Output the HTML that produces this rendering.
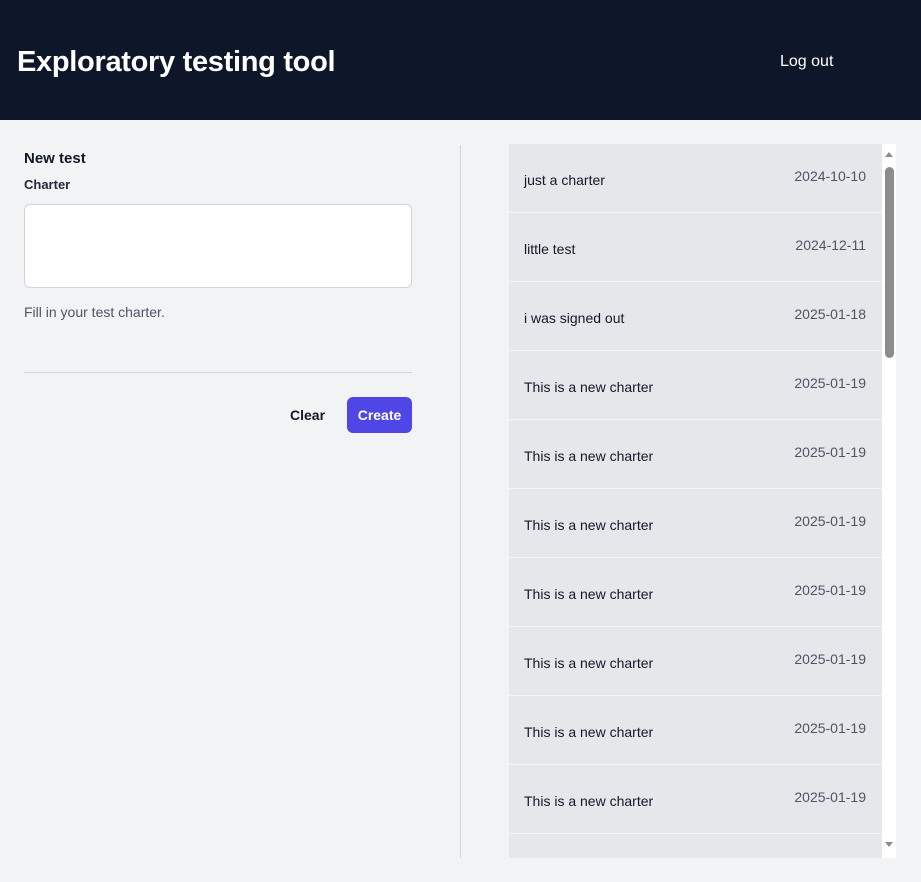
<!DOCTYPE html>
<html><head><meta charset="utf-8"><style>
*{box-sizing:border-box;margin:0;padding:0}
body{width:921px;height:882px;background:#f2f3f5;font-family:"Liberation Sans",sans-serif;color:#111827;overflow:hidden;position:relative}
.hdr{position:absolute;left:0;top:0;width:921px;height:120px;background:#0e1729}
.hdr h1{position:absolute;left:17px;top:46px;font-size:29px;font-weight:bold;color:#fff;letter-spacing:-0.3px}
.hdr .lo{position:absolute;left:780px;top:53px;font-size:16px;color:#fff}
.abs{position:absolute}
.ta{position:absolute;left:24px;top:204px;width:388px;height:84px;background:#fff;border:1px solid #d1d5db;border-radius:6px}
.div{position:absolute;left:460px;top:145px;width:1px;height:713px;background:#d1d5db}
.list{position:absolute;left:509px;top:144px;width:373px;height:714px;overflow:hidden;background:#e5e7eb}
.row{height:69px;border-bottom:1px solid #f3f4f6;position:relative;font-size:14px}
.row .t{position:absolute;left:15px;top:28px;color:#111827}
.row .d{position:absolute;right:16px;top:24px;color:#4b5563}
.sb{position:absolute;left:882px;top:144px;width:14px;height:714px;background:#fff}
.thumb{position:absolute;left:885px;top:167px;width:9px;height:191px;background:#8c8c8c;border-radius:5px}
</style></head><body>
<div class="hdr"><h1>Exploratory testing tool</h1><div class="lo">Log out</div></div>
<div class="abs" style="left:24px;top:150px;font-size:15px;font-weight:600;">New test</div>
<div class="abs" style="left:24px;top:177px;font-size:13px;font-weight:bold;color:#1f2937">Charter</div>
<div class="ta"></div>
<div class="abs" style="left:24px;top:304px;font-size:14px;color:#4b5563">Fill in your test charter.</div>
<div class="abs" style="left:24px;top:372px;width:388px;height:1px;background:#d1d5db"></div>
<div class="abs" style="left:290px;top:407px;font-size:14px;font-weight:bold">Clear</div>
<div class="abs" style="left:347px;top:397px;width:65px;height:36px;background:#4f46e5;border-radius:6px;color:#fff;font-size:14px;font-weight:bold;text-align:center;line-height:36px">Create</div>
<div class="div"></div>
<div class="list">
<div class="row"><span class="t">just a charter</span><span class="d">2024-10-10</span></div>
<div class="row"><span class="t">little test</span><span class="d">2024-12-11</span></div>
<div class="row"><span class="t">i was signed out</span><span class="d">2025-01-18</span></div>
<div class="row"><span class="t">This is a new charter</span><span class="d">2025-01-19</span></div>
<div class="row"><span class="t">This is a new charter</span><span class="d">2025-01-19</span></div>
<div class="row"><span class="t">This is a new charter</span><span class="d">2025-01-19</span></div>
<div class="row"><span class="t">This is a new charter</span><span class="d">2025-01-19</span></div>
<div class="row"><span class="t">This is a new charter</span><span class="d">2025-01-19</span></div>
<div class="row"><span class="t">This is a new charter</span><span class="d">2025-01-19</span></div>
<div class="row"><span class="t">This is a new charter</span><span class="d">2025-01-19</span></div>
<div class="row"></div>
</div>
<div class="sb"></div>
<div class="abs" style="left:885px;top:152px;width:0;height:0;border-left:4px solid transparent;border-right:4px solid transparent;border-bottom:5px solid #8c8c8c"></div>
<div class="thumb"></div>
<div class="abs" style="left:885px;top:842px;width:0;height:0;border-left:4px solid transparent;border-right:4px solid transparent;border-top:5px solid #8c8c8c"></div>
</body></html>
